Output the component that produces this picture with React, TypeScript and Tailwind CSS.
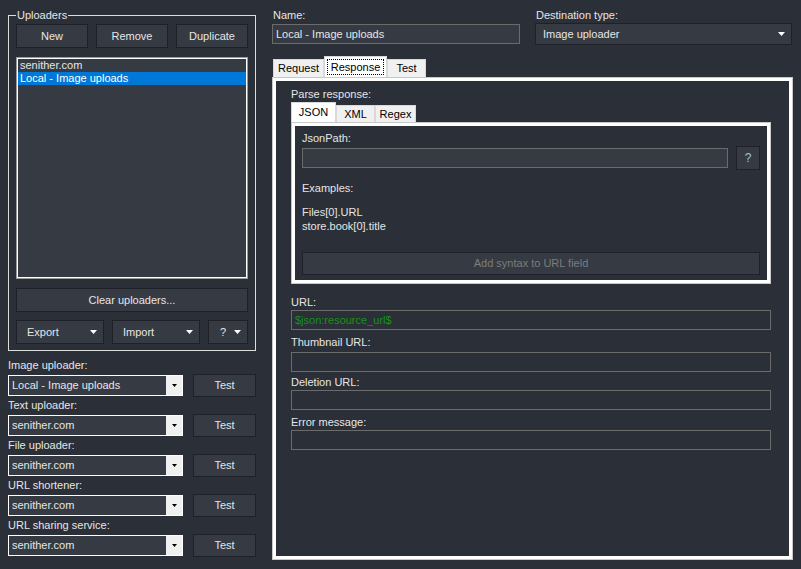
import type { ReactNode } from "react";

function Tri({ className = "" }: { className?: string }) {
  return (
    <svg width="7" height="4" viewBox="0 0 7 4" className={className}>
      <polygon points="0,0 7,0 3.5,4" fill="currentColor" />
    </svg>
  );
}

function Btn({ children, className = "" }: { children: ReactNode; className?: string }) {
  return (
    <div className={`flex items-center justify-center border border-[#1e2127] bg-[#353a43] ${className}`}>
      {children}
    </div>
  );
}

function MenuBtn({ label, width, pl }: { label: string; width: string; pl: string }) {
  return (
    <div className={`flex h-[24px] items-center justify-between border border-[#1e2127] bg-[#353a43] pr-[6px] ${width} ${pl}`}>
      <span>{label}</span>
      <Tri className="text-white" />
    </div>
  );
}

function UploaderRow({ label, value }: { label: string; value: string }) {
  return (
    <>
      <div className="h-[17px] leading-[16px]">{label}</div>
      <div className="flex h-[23px] items-center">
        <div className="flex h-[21px] w-[175px] border border-white bg-[#353a43]">
          <div className="flex-1 pl-[3px] leading-[19px]">{value}</div>
          <div className="flex w-[16px] items-center justify-center bg-[#f0f0f0] text-black">
            <svg width="5" height="3" viewBox="0 0 5 3">
              <polygon points="0,0 5,0 2.5,3" fill="currentColor" />
            </svg>
          </div>
        </div>
        <Btn className="ml-[10px] h-[23px] w-[63px]">Test</Btn>
      </div>
    </>
  );
}

function TextBox({ value, className = "" }: { value?: string; className?: string }) {
  return (
    <div className={`h-[20px] border border-[#6b6b6b] pl-[3px] leading-[18px] ${className}`}>{value}</div>
  );
}

export default function App() {
  return (
    <div className="flex h-[569px] w-[801px] overflow-hidden bg-[#2b2f38] font-['Liberation_Sans',Arial,sans-serif] text-[11px] text-[#e6e6e6]">
      {/* left column */}
      <div className="ml-[8px] mt-[8px] w-[248px]">
        <fieldset className="border border-[#dcdcdc] px-[7px] pb-[6px]">
          <legend className="h-[14px] px-[1px] leading-[14px]">Uploaders</legend>
          <div className="mt-[2px] flex gap-[8px]">
            <Btn className="h-[24px] w-[72px]">New</Btn>
            <Btn className="h-[24px] w-[72px]">Remove</Btn>
            <Btn className="h-[24px] w-[72px]">Duplicate</Btn>
          </div>
          <div className="mt-[9px] h-[222px] border border-[#9a9a9a]">
            <div className="h-full border border-white bg-[#353a43]">
              <div className="h-[13px] pl-[2px] leading-[13px]">senither.com</div>
              <div className="h-[13px] bg-[#0078d7] pl-[2px] leading-[13px] text-white">Local - Image uploads</div>
            </div>
          </div>
          <Btn className="mt-[9px] h-[24px] w-full">Clear uploaders...</Btn>
          <div className="mt-[8px] flex gap-[8px]">
            <MenuBtn label="Export" width="w-[88px]" pl="pl-[10px]" />
            <MenuBtn label="Import" width="w-[88px]" pl="pl-[10px]" />
            <MenuBtn label="?" width="w-[40px]" pl="pl-[11px]" />
          </div>
        </fieldset>
        <div className="mt-[6px]">
          <UploaderRow label="Image uploader:" value="Local - Image uploads" />
          <UploaderRow label="Text uploader:" value="senither.com" />
          <UploaderRow label="File uploader:" value="senither.com" />
          <UploaderRow label="URL shortener:" value="senither.com" />
          <UploaderRow label="URL sharing service:" value="senither.com" />
        </div>
      </div>

      {/* right column */}
      <div className="ml-[16px] w-[521px]">
        <div className="flex gap-[15px] pt-[7px]">
          <div className="w-[248px]">
            <div className="h-[16px] pl-[1px] leading-[16px]">Name:</div>
            <TextBox value="Local - Image uploads" className="mt-[1px] bg-[#353a43]" />
          </div>
          <div className="w-[257px]">
            <div className="h-[16px] pl-[1px] leading-[16px]">Destination type:</div>
            <div className="flex h-[22px] items-center justify-between border border-[#1e2127] bg-[#353a43] pl-[7px] pr-[6px]">
              <span>Image uploader</span>
              <Tri className="text-white" />
            </div>
          </div>
        </div>

        {/* tabs */}
        <div className="mt-[11px] flex h-[21px] items-end pl-[1px] text-black">
          <div className="flex h-[18px] w-[51px] items-center justify-center border border-b-0 border-[#d9d9d9] bg-[#f0f0f0]">Request</div>
          <div className="flex h-[21px] w-[63px] items-center justify-center border border-b-0 border-[#d9d9d9] bg-white">
            <span className="border border-dotted border-black px-[3px] leading-[14px]">Response</span>
          </div>
          <div className="flex h-[18px] w-[39px] items-center justify-center border border-b-0 border-[#d9d9d9] bg-[#f0f0f0]">Test</div>
        </div>
        <div className="h-[483px] border border-[#c8c8c8]">
          <div className="h-full border-[3px] border-white pl-[15px] pt-[5px]">
            <div className="h-[16px] leading-[16px]">Parse response:</div>
            <div className="flex h-[20px] items-end text-black">
              <div className="flex h-[20px] w-[45px] items-center justify-center border border-b-0 border-[#d9d9d9] bg-white">JSON</div>
              <div className="flex h-[17px] w-[39px] items-center justify-center border border-b-0 border-[#d9d9d9] bg-[#f0f0f0]">XML</div>
              <div className="flex h-[17px] w-[41px] items-center justify-center border border-b-0 border-[#d9d9d9] bg-[#f0f0f0]">Regex</div>
            </div>
            <div className="h-[162px] w-[480px] border border-[#c8c8c8]">
              <div className="h-full border-[3px] border-white px-[7px] pt-[4px]">
                <div className="h-[16px] leading-[16px]">JsonPath:</div>
                <div className="flex h-[24px] items-center gap-[8px]">
                  <TextBox className="flex-1 bg-[#353a43]" />
                  <Btn className="h-[24px] w-[24px] text-[12px] text-[#9dc3ea]">?</Btn>
                </div>
                <div className="mt-[10px] h-[16px] leading-[16px]">Examples:</div>
                <div className="mt-[9px] h-[14px] leading-[14px]">Files[0].URL</div>
                <div className="h-[14px] leading-[14px]">store.book[0].title</div>
                <Btn className="mt-[19px] h-[23px] w-full text-[#7d7d7d]">Add syntax to URL field</Btn>
              </div>
            </div>
            <div className="mt-[10px] h-[16px] leading-[16px]">URL:</div>
            <TextBox value="$json:resource_url$" className="w-[480px] text-[#1a8f1a]" />
            <div className="mt-[4px] h-[16px] leading-[16px]">Thumbnail URL:</div>
            <TextBox className="mt-[2px] w-[480px]" />
            <div className="mt-[2px] h-[16px] leading-[16px]">Deletion URL:</div>
            <TextBox className="w-[480px]" />
            <div className="mt-[4px] h-[16px] leading-[16px]">Error message:</div>
            <TextBox className="w-[480px]" />
          </div>
        </div>
      </div>
    </div>
  );
}
